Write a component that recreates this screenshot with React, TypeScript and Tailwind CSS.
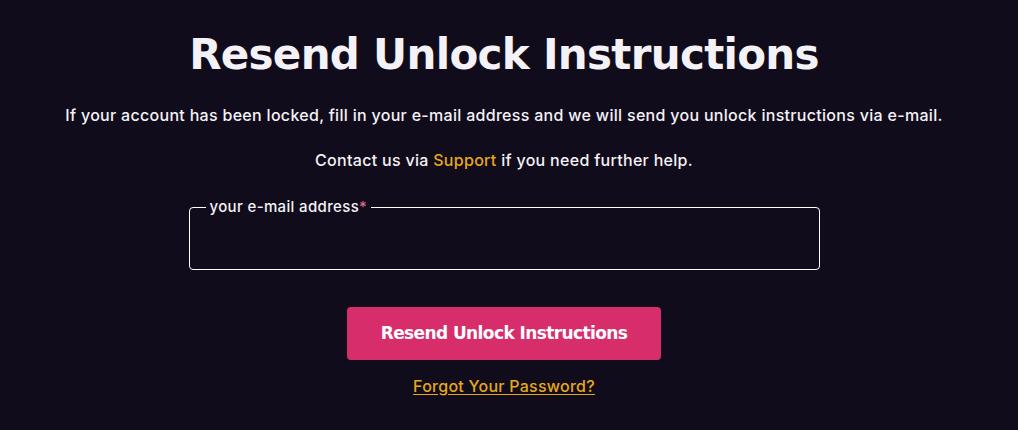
export default function App() {
  return (
    <div className="min-h-[430px] w-full bg-[#110c1b] text-[#f4f2f7]">
      <div className="flex flex-col items-center pr-[10px] pt-[28px]">
        <h1 className="font-['DejaVu_Sans',sans-serif] text-[42px] font-bold leading-[54px] tracking-[-0.7px]">
          Resend Unlock Instructions
        </h1>
        <p className="mt-[22px] font-['Inter',sans-serif] text-[16px] font-medium leading-[22px] tracking-[0.3px]">
          If your account has been locked, fill in your e-mail address and we will send you unlock instructions via e-mail.
        </p>
        <p className="mt-[23px] font-['Inter',sans-serif] text-[16px] font-medium leading-[22px] tracking-[0.3px]">
          Contact us via <a href="#" className="text-[#e6a91c]">Support</a> if you need further help.
        </p>

        <form className="mt-[28px] flex w-[631px] flex-col items-center">
          <fieldset className="w-full rounded-[4px] border border-white px-[16px] pb-[14px]">
            <legend className="px-[4px] font-['Inter',sans-serif] text-[15px] font-medium leading-[16px] tracking-[0.35px]">
              your e-mail address<span className="text-[#d9659a]">*</span>
            </legend>
            <input type="email" className="h-[40px] w-full bg-transparent text-[15px] outline-none" />
          </fieldset>

          <button
            type="button"
            className="mt-[37px] h-[53px] w-[314px] rounded-[4px] bg-[#d72e6b] font-['DejaVu_Sans',sans-serif] text-[17px] font-bold tracking-[-0.6px] text-white"
          >
            Resend Unlock Instructions
          </button>

          <a
            href="#"
            className="mt-[14px] font-['Inter',sans-serif] text-[16px] font-medium tracking-[0.25px] text-[#e6a91c] underline underline-offset-2"
          >
            Forgot Your Password?
          </a>
        </form>
      </div>
    </div>
  )
}
